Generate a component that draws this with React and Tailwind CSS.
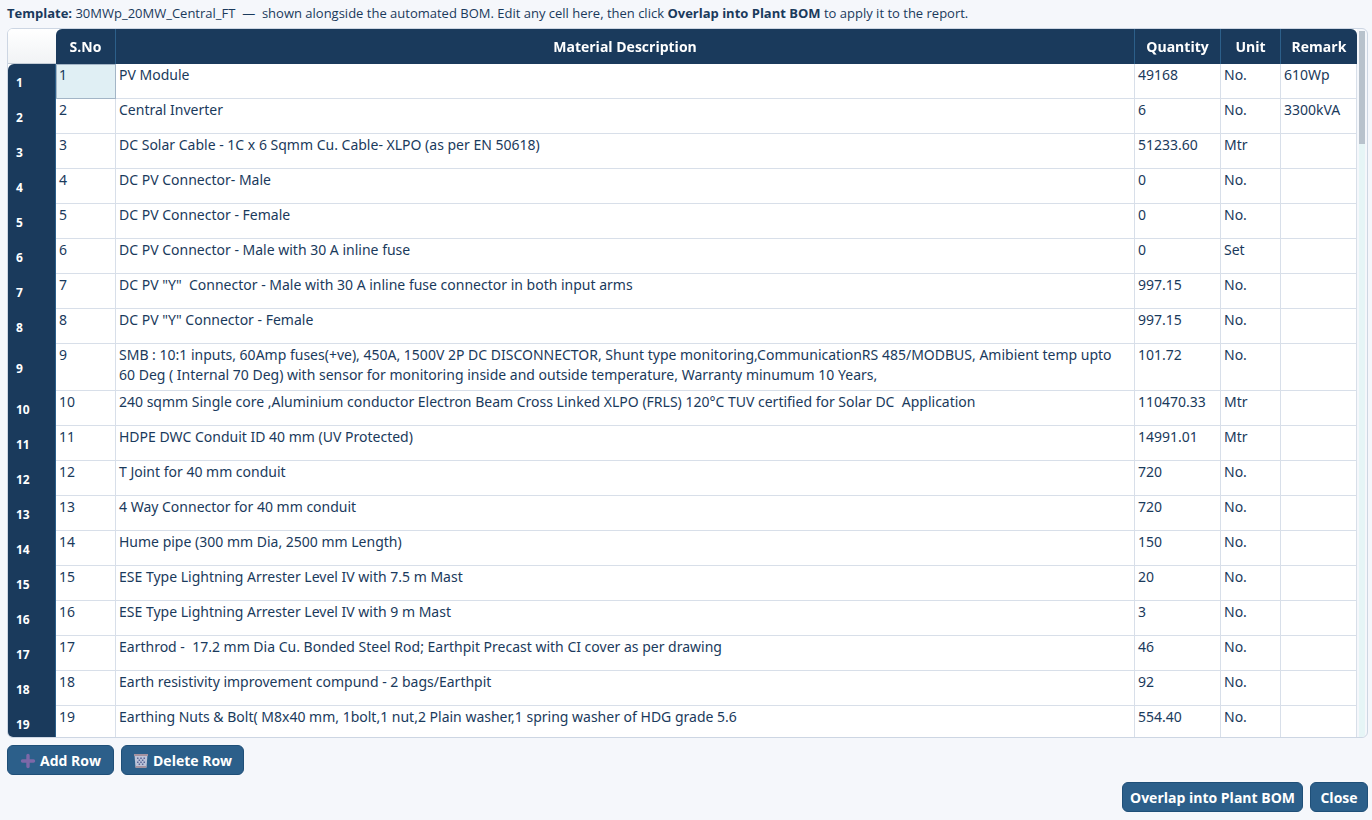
const rows = [
  ["1", "PV Module", "49168", "No.", "610Wp"],
  ["2", "Central Inverter", "6", "No.", "3300kVA"],
  ["3", "DC Solar Cable - 1C x 6 Sqmm Cu. Cable- XLPO (as per EN 50618)", "51233.60", "Mtr", ""],
  ["4", "DC PV Connector- Male", "0", "No.", ""],
  ["5", "DC PV Connector - Female", "0", "No.", ""],
  ["6", "DC PV Connector - Male with 30 A inline fuse", "0", "Set", ""],
  ["7", "DC PV \"Y\"  Connector - Male with 30 A inline fuse connector in both input arms", "997.15", "No.", ""],
  ["8", "DC PV \"Y\" Connector - Female", "997.15", "No.", ""],
  ["9", "SMB : 10:1 inputs, 60Amp fuses(+ve), 450A, 1500V 2P DC DISCONNECTOR, Shunt type monitoring,CommunicationRS 485/MODBUS, Amibient temp upto 60 Deg ( Internal 70 Deg) with sensor for monitoring inside and outside temperature, Warranty minumum 10 Years,", "101.72", "No.", ""],
  ["10", "240 sqmm Single core ,Aluminium conductor Electron Beam Cross Linked XLPO (FRLS) 120°C TUV certified for Solar DC  Application", "110470.33", "Mtr", ""],
  ["11", "HDPE DWC Conduit ID 40 mm (UV Protected)", "14991.01", "Mtr", ""],
  ["12", "T Joint for 40 mm conduit", "720", "No.", ""],
  ["13", "4 Way Connector for 40 mm conduit", "720", "No.", ""],
  ["14", "Hume pipe (300 mm Dia, 2500 mm Length)", "150", "No.", ""],
  ["15", "ESE Type Lightning Arrester Level IV with 7.5 m Mast", "20", "No.", ""],
  ["16", "ESE Type Lightning Arrester Level IV with 9 m Mast", "3", "No.", ""],
  ["17", "Earthrod -  17.2 mm Dia Cu. Bonded Steel Rod; Earthpit Precast with CI cover as per drawing", "46", "No.", ""],
  ["18", "Earth resistivity improvement compund - 2 bags/Earthpit", "92", "No.", ""],
  ["19", "Earthing Nuts & Bolt( M8x40 mm, 1bolt,1 nut,2 Plain washer,1 spring washer of HDG grade 5.6", "554.40", "No.", ""],
];

const columns = ["S.No", "Material Description", "Quantity", "Unit", "Remark"];

function PlusIcon() {
  return (
    <svg className="size-4" viewBox="0 0 16 16" aria-hidden="true">
      <path d="M8 2.5v11M2.5 8h11" stroke="#7d68a8" strokeWidth="3.4" strokeLinecap="round" />
    </svg>
  );
}

function BasketIcon() {
  return (
    <svg className="size-4" viewBox="0 0 16 16" aria-hidden="true">
      <path d="M1.5 2h13l-1 12.5h-11z" fill="#bcc3d8" />
      <g fill="#5b6798">
        <path d="M4 4.5h1.5V6H4zM7.2 4.5h1.6V6H7.2zM10.5 4.5H12V6h-1.5zM5.6 6.5h1.5V8H5.6zM8.9 6.5h1.5V8H8.9zM4 8.5h1.5V10H4zM7.2 8.5h1.6V10H7.2zM10.5 8.5H12V10h-1.5zM5.6 10.5h1.5V12H5.6zM8.9 10.5h1.5V12H8.9z" />
      </g>
      <path d="M1 1h14v2H1zM2.5 13h11l-.2 2H2.7z" fill="#a5929f" />
    </svg>
  );
}

function Button({ children, className = "" }) {
  return (
    <button
      type="button"
      className={`flex h-[30px] items-center justify-center gap-1 rounded-md border border-[#1f4f78] bg-[#2c5f8a] pt-[2px] font-['Open_Sans','Noto_Sans',sans-serif] text-sm font-bold text-white ${className}`}
    >
      {children}
    </button>
  );
}

export default function App() {
  return (
    <main className="flex h-screen flex-col bg-[#f5f7fb] pr-1 pb-2 pl-[7px] font-['Noto_Sans',sans-serif] text-[#1a3a5c]">
      <p className="pt-[3px] pb-[5px] font-['Open_Sans','Noto_Sans',sans-serif] text-[13px] leading-5 whitespace-pre-wrap">
        <b>Template:</b> 30MWp_20MW_Central_FT{"  —  "}shown alongside the automated BOM. Edit any cell here, then click{" "}
        <b>Overlap into Plant BOM</b> to apply it to the report.
      </p>

      <section className="flex min-h-0 flex-1 overflow-hidden rounded-md border border-[#cdd6e3]">
        <div className="min-w-0 flex-1 overflow-y-auto bg-white [scrollbar-width:none]">
          <table className="w-full table-fixed border-separate border-spacing-0 text-sm leading-5">
            <colgroup>
              <col className="w-12" />
              <col className="w-[60px]" />
              <col />
              <col className="w-[86px]" />
              <col className="w-[60px]" />
              <col className="w-[76px]" />
            </colgroup>
            <thead className="sticky top-0 font-['Open_Sans','Noto_Sans',sans-serif]">
              <tr className="h-[35px]">
                <td className="border-b border-[#c3ccd6] bg-linear-to-b from-white to-[#f1f3f5]" />
                {columns.map((name) => (
                  <th
                    key={name}
                    scope="col"
                    className="border-r border-[#2c5f8a] bg-[#1a3a5c] p-0 text-center font-bold text-white first-of-type:rounded-tl-md last:rounded-tr-md last:border-r-0"
                  >
                    {name}
                  </th>
                ))}
              </tr>
            </thead>
            <tbody>
              {rows.map((row, i) => (
                <tr key={row[0]} className="group/row h-[35px]">
                  <th
                    scope="row"
                    className="border-r border-[#2c5f8a] bg-[#1a3a5c] pt-[2px] pr-0 pb-0 pl-2 text-left align-middle text-xs font-bold text-white group-first/row:rounded-tl-md"
                  >
                    {row[0]}
                  </th>
                  {row.map((cell, j) => (
                    <td
                      key={j}
                      className={
                        i === 0 && j === 0
                          ? "border border-[#a3b5c6] bg-[#e0eff4] px-[2px] py-0 align-top"
                          : "border-r border-b border-[#d8dfe9] px-[3px] pt-px pb-[5px] align-top whitespace-pre-wrap"
                      }
                    >
                      {cell}
                    </td>
                  ))}
                </tr>
              ))}
            </tbody>
          </table>
        </div>
        <div className="w-[10px] px-[2px] pt-[2px]" aria-hidden="true">
          <div className="h-full w-[6px] bg-[#e6f5f6]">
            <div className="h-[16%] bg-[#b8c2cc]" />
          </div>
        </div>
      </section>

      <div className="flex gap-[7px] pt-[7px]">
        <Button className="min-w-[107px] px-[11px]">
          <PlusIcon />
          Add Row
        </Button>
        <Button className="min-w-[107px] px-[11px]">
          <BasketIcon />
          Delete Row
        </Button>
      </div>
      <div className="flex justify-end gap-[7px] pt-[7px]">
        <Button className="min-w-[58px] px-[7px]">Overlap into Plant BOM</Button>
        <Button className="min-w-[58px] px-[7px]">Close</Button>
      </div>
    </main>
  );
}
